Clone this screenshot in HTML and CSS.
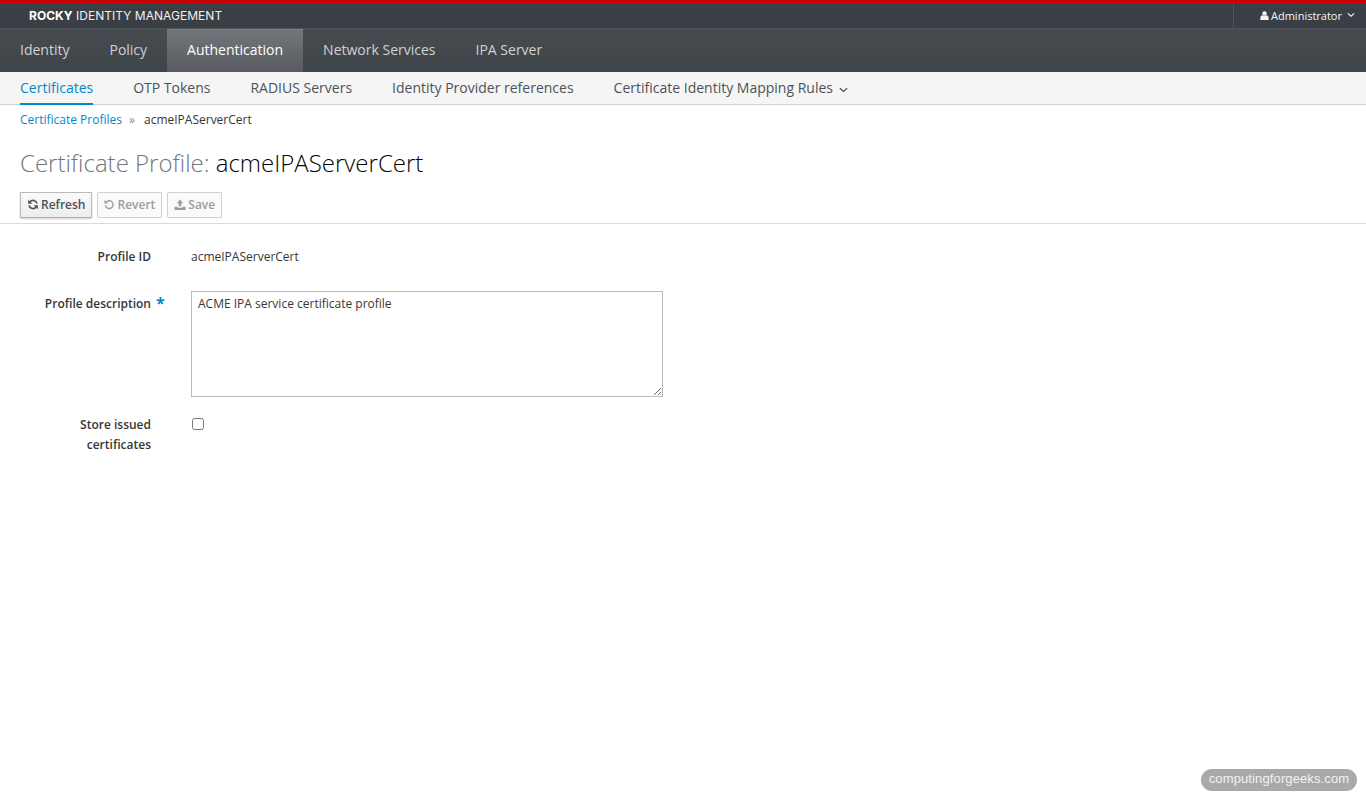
FILE: index.html
```html
<!DOCTYPE html>
<html lang="en">
<head>
  <meta charset="UTF-8">
  <title>Rocky Identity Management</title>
  <link rel="stylesheet" href="styles.css">
</head>
<body>
  <header class="utility-bar">
    <div class="brand"><b>ROCKY</b> IDENTITY MANAGEMENT</div>
    <div class="user-menu">
      <svg class="user-icon" viewBox="0 0 12 12"><circle cx="6" cy="3.200" r="3"/><path d="M.5 12V8.600C.5 7 1.800 6 3.400 5.600 4.100 6.300 5 6.700 6 6.700s1.900-.4 2.600-1.100C10.200 6 11.500 7 11.500 8.600V12z"/></svg>
      Administrator
      <svg class="chevron" viewBox="0 0 10 6"><path d="M1 1l4 3.600L9 1"/></svg>
    </div>
  </header>

  <nav class="main-nav">
    <a href="#">Identity</a>
    <a href="#">Policy</a>
    <a href="#" class="active">Authentication</a>
    <a href="#">Network Services</a>
    <a href="#">IPA Server</a>
  </nav>

  <nav class="sub-nav">
    <a href="#" class="active">Certificates</a>
    <a href="#">OTP Tokens</a>
    <a href="#">RADIUS Servers</a>
    <a href="#">Identity Provider references</a>
    <a href="#">Certificate Identity Mapping Rules
      <svg class="chevron" viewBox="0 0 10 6"><path d="M1 1l4 3.600L9 1"/></svg>
    </a>
  </nav>

  <div class="breadcrumb">
    <a href="#">Certificate Profiles</a>
    <span class="separator">&raquo;</span>
    <span>acmeIPAServerCert</span>
  </div>

  <h1 class="page-title">Certificate Profile: <span>acmeIPAServerCert</span></h1>

  <div class="toolbar">
    <button class="btn btn-refresh">
      <svg class="btn-icon" viewBox="0 0 12 12"><path d="M10.400 4.800A4.500 4.500 0 0 0 2.600 3.200M1.600 7.200a4.500 4.500 0 0 0 7.800 1.600" fill="none" stroke="currentColor" stroke-width="1.900"/><path d="M.7.7v4.600h4.600zM11.300 11.300V6.700H6.700z"/></svg>
      Refresh
    </button>
    <button class="btn" disabled>
      <svg class="btn-icon" viewBox="0 0 12 12"><path d="M3 3.300a4.300 4.300 0 1 1-1 3.700" fill="none" stroke="currentColor" stroke-width="1.500"/><path d="M1 1v4h4z"/></svg>
      Revert
    </button>
    <button class="btn btn-save" disabled>
      <svg class="btn-icon" viewBox="0 0 12 12"><path d="M6 .5L9.500 4.500H7.400V8H4.600V4.500H2.500zM0 8.500h3.500v1h5v-1H12V12H0z"/></svg>
      Save
    </button>
  </div>

  <form class="details">
    <div class="row row-id">
      <label>Profile ID</label>
      <div class="value">acmeIPAServerCert</div>
    </div>
    <div class="row row-description">
      <label>Profile description<span class="required">*</span></label>
      <textarea class="field">ACME IPA service certificate profile</textarea>
    </div>
    <div class="row row-store">
      <label>Store issued certificates</label>
      <input type="checkbox" class="check">
    </div>
  </form>

  <div class="watermark">computingforgeeks.com</div>
</body>
</html>
```

FILE: styles.css
```css
* {
  box-sizing: border-box;
}

html,
body {
  height: 100%;
}

body {
  margin: 0;
  position: relative;
  overflow: hidden;
  background: #fff;
  color: #363636;
  font-family: "Open Sans", sans-serif;
  font-size: 12px;
}

a {
  text-decoration: none;
}

.chevron {
  width: 9px;
  height: 6px;
  fill: none;
  stroke: currentColor;
  stroke-width: 1.4;
}

/* top bars */
.utility-bar {
  height: 29px;
  display: flex;
  justify-content: space-between;
  align-items: stretch;
  background: #393f44;
  border-top: 3px solid #c90000;
  border-bottom: 1px solid #50555a;
  color: #fff;
}

.brand {
  padding: 0 0 1px 29px;
  align-self: center;
  font-family: "Inter", sans-serif;
  font-size: 12px;
  letter-spacing: .03px;
  color: #f0f0f0;
}

.brand b {
  font-weight: 700;
  color: #fff;
}

.user-menu {
  width: 133px;
  display: flex;
  align-items: center;
  padding: 0 0 0 26px;
  gap: 2px;
  border-left: 1px solid #50555a;
  font-size: 11px;
  color: #f5f5f5;
}

.user-icon {
  width: 9px;
  height: 9px;
  fill: #f5f5f5;
}

.user-menu .chevron {
  margin-left: 3px;
  margin-bottom: 2px;
  width: 8px;
}

.main-nav {
  height: 43px;
  display: flex;
  background: linear-gradient(#474c50, #3f4448);
}

.main-nav a {
  padding: 0 20px;
  line-height: 41px;
  font-size: 14px;
  color: #d1d1d1;
}

.main-nav a.active {
  background: linear-gradient(#72757a, #585c60);
  border-top: 1px solid #7d8083;
  line-height: 39px;
  color: #fff;
}

.sub-nav {
  height: 33px;
  display: flex;
  gap: 40px;
  padding-left: 20px;
  background: #f5f5f5;
  border-bottom: 1px solid #d1d1d1;
}

.sub-nav a {
  line-height: 32px;
  height: 33px;
  font-size: 14px;
  color: #4d5258;
}

.sub-nav a.active {
  color: #0088ce;
  border-bottom: 2px solid #0088ce;
}

.sub-nav .chevron {
  margin-left: 2px;
}

/* page head */
.breadcrumb {
  padding: 6px 20px 0;
  height: 29px;
  line-height: 18px;
  display: flex;
  font-size: 12px;
  color: #363636;
}

.breadcrumb a {
  color: #0088ce;
}

.separator {
  margin: 0 9px 0 7px;
  color: #8b8d8f;
}

.page-title {
  margin: 0;
  padding: 0 20px;
  height: 50px;
  line-height: 58px;
  font-size: 24px;
  font-weight: 300;
  color: #72767b;
  white-space: nowrap;
}

.page-title span {
  color: #030303;
}

.toolbar {
  margin-top: 8px;
  height: 32px;
  padding-left: 20px;
  display: flex;
  gap: 5px;
  align-items: flex-start;
  border-bottom: 1px solid #d9d9d9;
}

.btn {
  height: 26px;
  padding: 0 6px 2px 5px;
  display: flex;
  align-items: center;
  gap: 2px;
  font-family: inherit;
  font-size: 12px;
  font-weight: 600;
  color: #4d5258;
  background: linear-gradient(#fafafa, #ededed);
  border: 1px solid #bbb;
  border-bottom-color: #b0b0b0;
  border-radius: 1px;
  box-shadow: 0 1px 2px rgba(0, 0, 0, .2);
}

.btn:disabled {
  color: #9c9c9c;
  background: #fafafa;
  border-color: #d1d1d1;
  box-shadow: none;
}

.btn-icon {
  width: 12px;
  height: 11px;
  fill: currentColor;
}

.btn-refresh {
  gap: 3px;
  padding-left: 6px;
  padding-right: 6px;
}

.btn-refresh .btn-icon {
  margin-right: -1px;
}

.btn-save {
  padding-left: 6px;
}

/* form */
.details {
  padding-top: 23px;
}

.row {
  display: grid;
  grid-template-columns: 151px auto;
  column-gap: 40px;
  align-items: start;
  justify-content: start;
}

.row label {
  position: relative;
  text-align: right;
  font-weight: 600;
  line-height: 20px;
  padding-left: 60px;
}

.row-id {
  height: 44px;
}

.value {
  line-height: 20px;
}

.row-description {
  height: 123px;
}

.row-description label {
  padding-top: 3px;
  padding-left: 0;
}

.required {
  position: absolute;
  left: 156px;
  top: 2px;
  font-size: 16px;
  font-weight: 700;
  color: #0088ce;
}

.field {
  width: 472px;
  height: 106px;
  padding: 3px 6px;
  margin: 0;
  display: block;
  border: 1px solid #bbb;
  border-radius: 0;
  font-family: inherit;
  font-size: 12px;
  line-height: 18px;
  color: #363636;
}

.check {
  width: 12px;
  height: 12px;
  margin: 4px 0 0 1px;
}

.row-store label {
  padding-top: 1px;
}

/* corner badge over the page */
.watermark {
  position: absolute;
  right: 9px;
  bottom: 9px;
  width: 156px;
  height: 22px;
  border-radius: 11px;
  background: #a9a9a9;
  color: #f2f2f2;
  font-family: "Liberation Sans", sans-serif;
  font-size: 13px;
  letter-spacing: .12px;
  line-height: 20px;
  text-align: center;
}
```
